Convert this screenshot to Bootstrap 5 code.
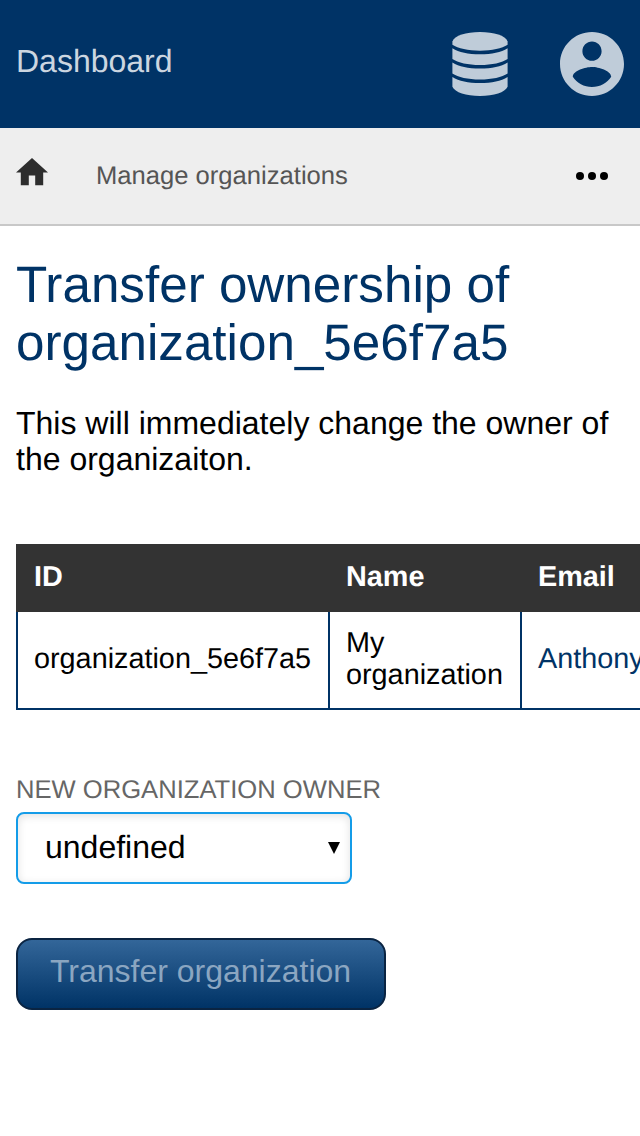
<!DOCTYPE html>
<html lang="en">
<head>
<meta charset="utf-8">
<meta name="viewport" content="width=device-width, initial-scale=1">
<title>Transfer ownership</title>
<link href="https://cdn.jsdelivr.net/npm/bootstrap@5.3.0/dist/css/bootstrap.min.css" rel="stylesheet">
<style>
body{font-family:"Liberation Sans",Arial,sans-serif;font-size:32px;line-height:36px;color:#000;background:#fff;overflow:hidden;text-rendering:geometricPrecision}
.topbar{height:128px;background:#036}
.brand-link{color:#ccd6e0;margin-bottom:6px}
.brand-link:hover{color:#fff}
.top-icons{gap:52px;color:#bfccd9}
.subbar{height:98px;background:#eee;border-bottom:2px solid #c8c8c8;font-size:25.6px;line-height:29px}
.sub-link{color:#555;margin-left:48px;margin-top:1px}
.home-link{color:#2d2d2d;margin-bottom:8px}
.page-title{font-size:51.2px;line-height:58px;font-weight:400;color:#036;margin:30px 0 33px}
.intro{margin:0 0 67px}
.table-clip{overflow:hidden;margin-right:-16px}
.org-table{width:924px;table-layout:fixed;border-collapse:collapse;font-size:28.8px;line-height:32px}
.org-table th,.org-table td{border:2px solid #036;padding:15px 16px 17px;vertical-align:middle}
.org-table th{background:#333;border-color:#333;color:#fff}
.col-id{width:312px}.col-name{width:192px}
.org-table a{color:#036}
.field-label{font-size:25.6px;line-height:29px;color:#666;margin:66px 0 7px}
.owner-select{width:336px;height:72px;border:2px solid #149ce8;border-radius:8px;padding:0 10px 3px 27px;font-size:32px;line-height:36px;color:#000;background:#fff;box-shadow:inset 0 2px 8px rgba(0,0,0,.12)}
.owner-select svg{margin-top:2px}
.submit-btn{width:370px;height:72px;margin-top:54px;padding:0 1px 7px 0;font-size:32px;line-height:36px;border-width:2px;border-radius:16px}
.submit-btn,.submit-btn:disabled{color:#8ba6c1;opacity:1;border-color:#0a2442;background:linear-gradient(#336699,#003366)}
</style>
<script src="https://cdn.jsdelivr.net/npm/bootstrap@5.3.0/dist/js/bootstrap.bundle.min.js"></script>
</head>
<body>
<header class="topbar d-flex align-items-center justify-content-between px-3">
  <a class="brand-link text-decoration-none" href="#">Dashboard</a>
  <div class="top-icons d-flex align-items-center">
    <svg width="56" height="64" viewBox="0 0 56 64" fill="currentColor" aria-label="Administration">
      <path d="M.4 9.500C2.500 3.500 14 0 28 0s25.500 3.500 27.600 9.500v3.300C50 16.500 40 18.700 28 18.700S6 16.500.4 12.800z"/>
      <path d="M.4 16.200C7 20.400 16 22.200 28 22.200s21-1.800 27.600-6v10.800C50 30.800 40 33 28 33S6 30.800.4 27z"/>
      <path d="M.4 30.600C7 34.800 16 36.600 28 36.600s21-1.800 27.600-6v10.800C50 45.200 40 47.400 28 47.400S6 45.200.4 41.400z"/>
      <path d="M.4 45C7 49.200 16 51 28 51s21-1.800 27.600-6v9.800C53 60.500 42 64 28 64S3 60.500.4 54.800z"/>
    </svg>
    <svg width="64" height="64" viewBox="2 2 20 20" fill="currentColor" aria-label="Account">
      <path d="M12 2C6.480 2 2 6.480 2 12s4.480 10 10 10 10-4.480 10-10S17.520 2 12 2zm0 3c1.660 0 3 1.340 3 3s-1.340 3-3 3-3-1.340-3-3 1.340-3 3-3zm0 14.200c-2.500 0-4.710-1.280-6-3.220.030-1.990 4-3.080 6-3.080 1.990 0 5.970 1.090 6 3.080-1.290 1.940-3.500 3.220-6 3.220z"/>
    </svg>
  </div>
</header>
<nav class="subbar d-flex align-items-center px-3">
  <a class="home-link d-flex" href="#" aria-label="Home"><svg width="32" height="28" viewBox="2 3 20 17.5" fill="currentColor"><path d="M10 20v-6h4v6h5v-8h3L12 3 2 12h3v8z"/></svg></a>
  <a class="sub-link text-decoration-none" href="#">Manage organizations</a>
  <a class="ms-auto me-3 d-flex text-black" href="#" aria-label="More"><svg width="32" height="8" viewBox="0 0 32 8" fill="currentColor"><circle cx="4" cy="4" r="4"/><circle cx="16" cy="4" r="4"/><circle cx="28" cy="4" r="4"/></svg></a>
</nav>
<main class="px-3">
  <h1 class="page-title">Transfer ownership of organization_5e6f7a5</h1>
  <p class="intro">This will immediately change the owner of the organizaiton.</p>
  <div class="table-clip">
    <table class="org-table">
      <colgroup><col class="col-id"><col class="col-name"><col></colgroup>
      <thead><tr><th>ID</th><th>Name</th><th>Email</th></tr></thead>
      <tbody><tr><td>organization_5e6f7a5</td><td>My organization</td><td><a class="text-decoration-none" href="#">Anthony</a></td></tr></tbody>
    </table>
  </div>
  <div class="field-label text-uppercase">New organization owner</div>
  <div class="owner-select d-flex align-items-center justify-content-between" role="combobox" tabindex="0">
    <span>undefined</span>
    <svg width="12" height="12" viewBox="0 0 12 12" aria-hidden="true"><path d="M0 0h12L6 12z"/></svg>
  </div>
  <button class="submit-btn btn d-block" type="submit" disabled>Transfer organization</button>
</main>
</body>
</html>
